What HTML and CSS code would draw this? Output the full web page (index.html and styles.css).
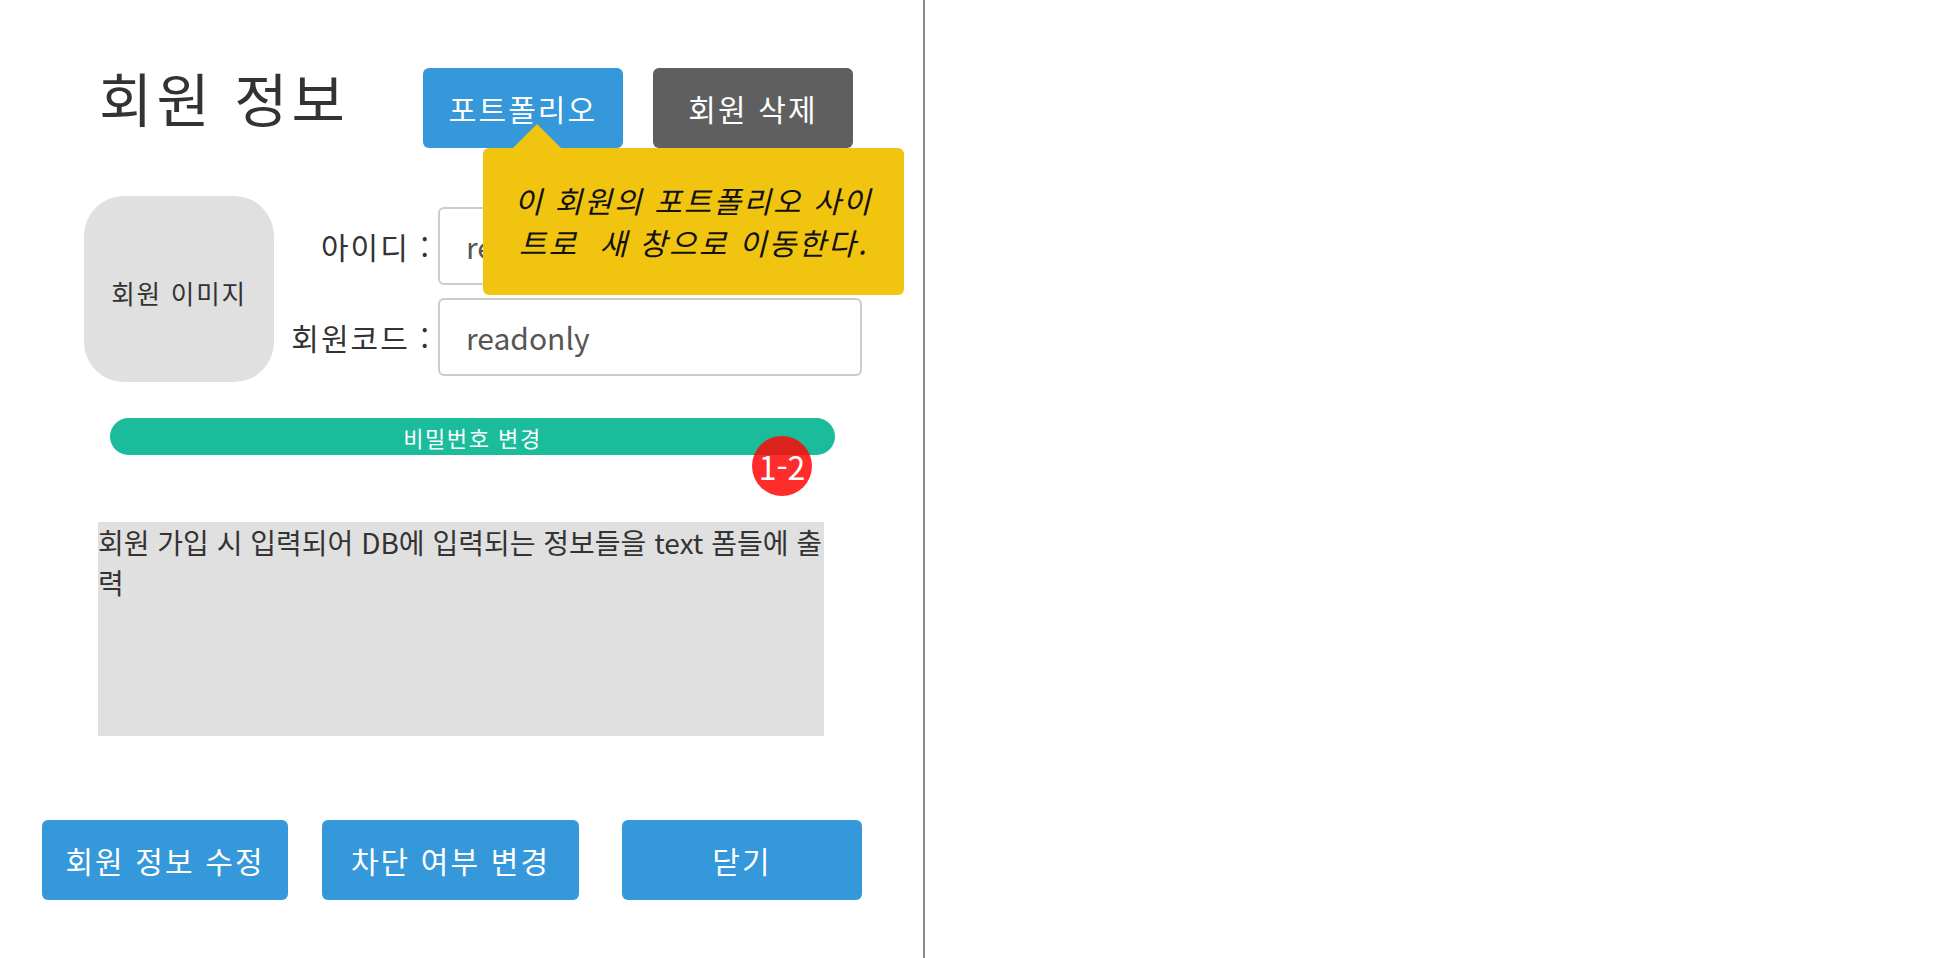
FILE: index.html
```html
<!DOCTYPE html>
<html lang="ko">
<head>
<meta charset="utf-8">
<title>회원 정보</title>
<link rel="stylesheet" href="styles.css">
</head>
<body>
<div class="page">
  <section class="panel">
    <header class="header">
      <h1 class="title">회원 정보</h1>
      <div class="header-actions">
        <div class="tip-wrap">
          <button class="btn btn-blue btn-top" type="button">포트폴리오</button>
          <div class="tooltip">이 회원의 포트폴리오 사이트로 &nbsp;새 창으로 이동한다.</div>
        </div>
        <button class="btn btn-gray btn-top" type="button">회원 삭제</button>
      </div>
    </header>

    <div class="profile">
      <div class="avatar">회원 이미지</div>
      <div class="fields">
        <label class="field-label" for="uid">아이디 :</label>
        <input class="field-input" id="uid" type="text" placeholder="readonly" readonly>
        <label class="field-label" for="ucode">회원코드 :</label>
        <input class="field-input" id="ucode" type="text" placeholder="readonly" readonly>
      </div>
    </div>

    <div class="pw-row">
      <button class="pw-bar" type="button">비밀번호 변경</button>
      <span class="badge">1-2</span>
    </div>

    <div class="info-box">
      <p class="info-text">회원 가입 시 입력되어 DB에 입력되는 정보들을 text 폼들에 출력</p>
    </div>

    <div class="actions">
      <button class="btn btn-blue btn-edit" type="button">회원 정보 수정</button>
      <button class="btn btn-blue btn-block" type="button">차단 여부 변경</button>
      <button class="btn btn-blue btn-close" type="button">닫기</button>
    </div>
  </section>
</div>
</body>
</html>
```

FILE: styles.css
```css
* { box-sizing: border-box; }

html, body {
  margin: 0;
  padding: 0;
  background: #ffffff;
}

body {
  font-family: "Noto Sans CJK KR", "Noto Sans CJK JP", sans-serif;
  color: #333333;
}

.page {
  display: flex;
  height: 958px;
}

.panel {
  width: 925px;
  height: 958px;
  border-right: 2px solid #8a8a8a;
}

/* header */
.header {
  display: flex;
  align-items: flex-start;
  padding: 68px 0 0 99px;
}

.title {
  margin: 0;
  font-size: 58px;
  line-height: 58px;
  font-weight: 400;
  letter-spacing: 0.07em;
  color: #333333;
}

.header-actions {
  display: flex;
  gap: 30px;
  margin-left: 74px;
}

.tip-wrap {
  position: relative;
}

.btn {
  border: none;
  border-radius: 6px;
  color: #ffffff;
  font-family: "Noto Sans CJK KR", "Noto Sans CJK JP", sans-serif;
  font-size: 30px;
  line-height: 1;
  letter-spacing: 0.07em;
  padding: 0;
  cursor: pointer;
}

.btn-blue { background: #3498db; }
.btn-gray { background: #5f5f5f; }

.btn-top {
  width: 200px;
  height: 80px;
}

.tooltip {
  position: absolute;
  z-index: 5;
  left: 60px;
  top: 80px;
  width: 421px;
  padding: 31px 28px 32px;
  background: #f1c40f;
  border-radius: 6px;
  color: #111111;
  font-size: 30px;
  line-height: 42px;
  font-style: italic;
  letter-spacing: 0.07em;
  text-align: center;
}

.tooltip::before {
  content: "";
  position: absolute;
  left: 30px;
  top: -24px;
  border-left: 24px solid transparent;
  border-right: 24px solid transparent;
  border-bottom: 24px solid #f1c40f;
}

/* profile */
.profile {
  display: flex;
  align-items: flex-start;
  margin-top: 48px;
  padding-left: 84px;
}

.avatar {
  width: 190px;
  height: 186px;
  padding-top: 7px;
  border-radius: 40px;
  background: #e0e0e0;
  display: flex;
  align-items: center;
  justify-content: center;
  font-size: 25.6px;
  letter-spacing: 0.07em;
  color: #333333;
}

.fields {
  display: grid;
  grid-template-columns: 141px 424px;
  column-gap: 7px;
  row-gap: 13px;
  align-items: center;
  margin: 11px 0 0 16px;
}

.field-label {
  font-size: 30px;
  line-height: 1;
  letter-spacing: 0.07em;
  text-align: right;
  white-space: nowrap;
  color: #333333;
}

.field-input {
  width: 424px;
  height: 78px;
  border: 2px solid #cccccc;
  border-radius: 6px;
  padding: 0 0 0 26px;
  font-family: "Noto Sans CJK KR", "Noto Sans CJK JP", sans-serif;
  font-size: 30px;
  color: #555555;
  background: #ffffff;
  outline: none;
}

.field-input::placeholder {
  color: #555555;
  opacity: 1;
}

/* password bar */
.pw-row {
  position: relative;
  width: 725px;
  margin: 36px 0 0 110px;
}

.pw-bar {
  display: block;
  width: 100%;
  height: 37px;
  border: none;
  border-radius: 19px;
  background: #1abc9c;
  color: #ffffff;
  font-family: "Noto Sans CJK KR", "Noto Sans CJK JP", sans-serif;
  font-size: 22px;
  line-height: 1;
  letter-spacing: 0.07em;
  padding: 0;
}

.badge {
  position: absolute;
  left: 642px;
  top: 18px;
  width: 60px;
  height: 60px;
  border-radius: 50%;
  background: rgba(255, 7, 7, 0.85);
  color: #ffffff;
  font-size: 32px;
  line-height: 60px;
  text-align: center;
}

/* info box */
.info-box {
  display: flow-root;
  width: 726px;
  height: 214px;
  margin: 67px 0 0 98px;
  background: #e0e0e0;
}

.info-text {
  margin: 0;
  font-size: 28px;
  line-height: 40px;
  color: #333333;
}

/* bottom actions */
.actions {
  display: flex;
  margin-top: 84px;
  padding-left: 42px;
}

.actions .btn {
  height: 80px;
}

.btn-edit { width: 246px; }
.btn-block { width: 257px; margin-left: 34px; }
.btn-close { width: 240px; margin-left: 43px; }
```
